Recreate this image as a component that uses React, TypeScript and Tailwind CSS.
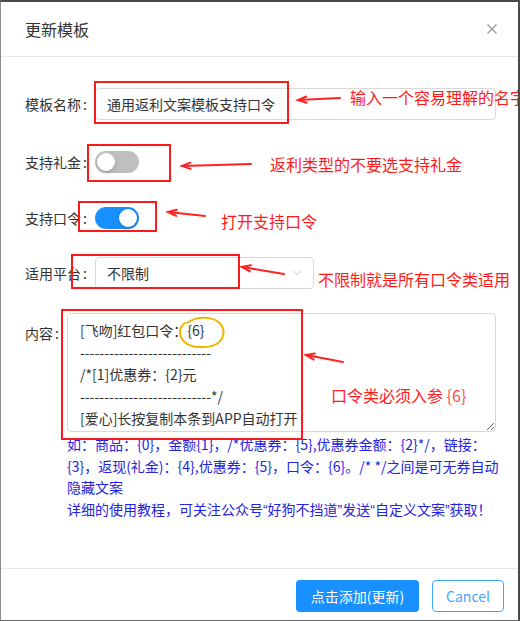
import { ChevronDown } from 'lucide-react';

const FONT = "font-['Microsoft_YaHei','Noto_Sans_CJK_SC',sans-serif]";

const DASHES = '---------------------------';
const TEMPLATE = `[飞吻]红包口令：{6}
${DASHES}
/*[1]优惠券：{2}元
${DASHES}*/
[爱心]长按复制本条到APP自动打开`;

function Label({ text }: { text: string }) {
  return (
    <span className="whitespace-nowrap text-[14px] text-[#333]">
      {text}
      <span className="ml-[2px] mr-[8px]">:</span>
    </span>
  );
}

function Switch({ on }: { on: boolean }) {
  return (
    <span
      className={`relative inline-flex h-[22px] w-[44px] items-center rounded-full ${
        on ? 'bg-[#1890ff] justify-end' : 'bg-[#bfbfbf] justify-start'
      } px-[2px]`}
    >
      <span className="h-[18px] w-[18px] rounded-full bg-white shadow-[0_2px_4px_rgba(0,35,11,0.2)]" />
    </span>
  );
}

// narrow curly quote, like the reference font
function Q({ c }: { c: string }) {
  return <span className="font-['Liberation_Sans',sans-serif]">{c}</span>;
}

// red annotation arrows, pointing left
const ARROWS = [
  [339, 96, 297, 98],
  [250, 162, 181, 164],
  [204, 214, 167, 210],
  [283, 272, 241, 265],
  [342, 360, 305, 353],
];

function Annotations() {
  return (
    <div className="pointer-events-none absolute inset-0">
      <div className="absolute left-[93px] top-[79px] h-[43px] w-[195px] border-2 border-[#ff1a1a]" />
      <div className="absolute left-[86px] top-[142px] h-[38px] w-[84px] border-2 border-[#ff1a1a]" />
      <div className="absolute left-[77px] top-[199px] h-[31px] w-[79px] border-2 border-[#ff1a1a]" />
      <div className="absolute left-[70px] top-[252px] h-[35px] w-[169px] border-2 border-[#ff1a1a]" />
      <div className="absolute left-[60px] top-[307px] h-[131px] w-[242px] border-2 border-[#ff1a1a]" />

      <svg className="absolute inset-0" width="520" height="621">
        {ARROWS.map(([x1, y1, x2, y2], i) => {
          const a = Math.atan2(y2 - y1, x2 - x1);
          const l = 9;
          const p1 = [x2 - l * Math.cos(a - 0.35), y2 - l * Math.sin(a - 0.35)];
          const p2 = [x2 - l * Math.cos(a + 0.35), y2 - l * Math.sin(a + 0.35)];
          return (
            <g key={i} stroke="#ff2222" strokeWidth="2" fill="none" strokeLinecap="round">
              <line x1={x1} y1={y1} x2={x2} y2={y2} />
              <polyline points={`${p1[0]},${p1[1]} ${x2},${y2} ${p2[0]},${p2[1]}`} />
            </g>
          );
        })}
        <path
          d="M186 321 C196 313 215 314 221 324 C226 335 218 345 203 345 C189 346 179 340 179 330 C179 326 181 323 184 321"
          stroke="#f5b400"
          strokeWidth="2"
          fill="none"
          strokeLinecap="round"
        />
      </svg>

      <span className="absolute left-[349px] top-[84px] whitespace-nowrap text-[16px] leading-[22px] text-[#ff1a1a]">
        输入一个容易理解的名字
      </span>
      <span className="absolute left-[269px] top-[151px] whitespace-nowrap text-[16px] leading-[22px] text-[#ff1a1a]">
        返利类型的不要选支持礼金
      </span>
      <span className="absolute left-[220px] top-[208px] whitespace-nowrap text-[16px] leading-[22px] text-[#ff1a1a]">
        打开支持口令
      </span>
      <span className="absolute left-[317px] top-[266px] whitespace-nowrap text-[16px] leading-[22px] text-[#ff1a1a]">
        不限制就是所有口令类适用
      </span>
      <span className="absolute left-[330px] top-[382px] whitespace-nowrap text-[16px] leading-[22px] text-[#ff1a1a]">
        口令类必须入参 <span className="text-[#ff4d4f]">{'{6}'}</span>
      </span>
    </div>
  );
}

export default function App() {
  return (
    <div
      className={`relative flex h-[621px] w-[520px] flex-col overflow-hidden border-t-2 border-l border-r-2 border-b border-t-[#4a4a4a] border-l-[#8c8c8c] border-r-[#4a4a4a] border-b-[#666] bg-white ${FONT}`}
    >
      <div className="flex h-[55px] shrink-0 items-center justify-between border-b border-[#e8e8e8] pl-[24px] pr-[21px]">
        <span className="text-[16px] text-[#333]">更新模板</span>
        <svg width="10" height="10" viewBox="0 0 10 10" stroke="#999" strokeWidth="1.3">
          <line x1="0.5" y1="0.5" x2="9.5" y2="9.5" />
          <line x1="9.5" y1="0.5" x2="0.5" y2="9.5" />
        </svg>
      </div>

      <div className="flex-1 pl-[24px] pr-[22px] pt-[31px]">
        <div className="mb-[26px] flex h-8 items-center">
          <Label text="模板名称" />
          <div className="flex h-8 flex-1 items-center rounded-[4px] border border-[#d9d9d9] px-[11px] text-[14px] text-[#333]">
            通用返利文案模板支持口令
          </div>
        </div>

        <div className="mb-6 flex h-8 items-center">
          <Label text="支持礼金" />
          <Switch on={false} />
        </div>

        <div className="mb-[23px] flex h-8 items-center">
          <Label text="支持口令" />
          <Switch on={true} />
        </div>

        <div className="mb-6 flex h-8 items-center">
          <Label text="适用平台" />
          <div className="flex h-8 w-[219px] items-center justify-between rounded-[4px] border border-[#d9d9d9] pl-[11px] pr-[9px] text-[14px] text-[#333]">
            <span>不限制</span>
            <ChevronDown size={14} color="#bfbfbf" strokeWidth={1.5} />
          </div>
        </div>

        <div className="flex items-start">
          <span className="pt-[7px]">
            <Label text="内容" />
          </span>
          <div className="min-w-0 flex-1">
            <textarea
              readOnly
              defaultValue={TEMPLATE}
              className={`block h-[119px] w-full resize-y rounded-[4px] border border-[#d9d9d9] px-3 pt-[5px] text-[14px] leading-[22px] text-[#333] outline-none ${FONT}`}
            />
            <div className="mt-[2px] whitespace-nowrap text-[14px] leading-[21.5px] text-[#2323e0]">
              <div>如：商品：{'{0}'}，金额{'{1}'}，/*优惠券：{'{5}'},优惠券金额：{'{2}'}*/，链接：</div>
              <div>{'{3}'}，返现(礼金)：{'{4}'},优惠券：{'{5}'}，口令：{'{6}'}。/* */之间是可无券自动</div>
              <div>隐藏文案</div>
              <div>
                详细的使用教程，可关注公众号<Q c="“" />好狗不挡道<Q c="”" />发送<Q c="“" />自定义文案<Q c="”" />获取！
              </div>
            </div>
          </div>
        </div>
      </div>

      <div className="flex h-[52px] shrink-0 items-start justify-end gap-[13px] border-t border-[#e8e8e8] pr-[14px] pt-[11px]">
        <button className="h-8 w-[123px] rounded-[4px] bg-[#1890ff] text-[14px] text-white">
          点击添加(更新)
        </button>
        <button className="h-8 w-[72px] rounded-[4px] border border-[#40a9ff] bg-white text-[14px] text-[#40a9ff]">
          Cancel
        </button>
      </div>

      <Annotations />
    </div>
  );
}
